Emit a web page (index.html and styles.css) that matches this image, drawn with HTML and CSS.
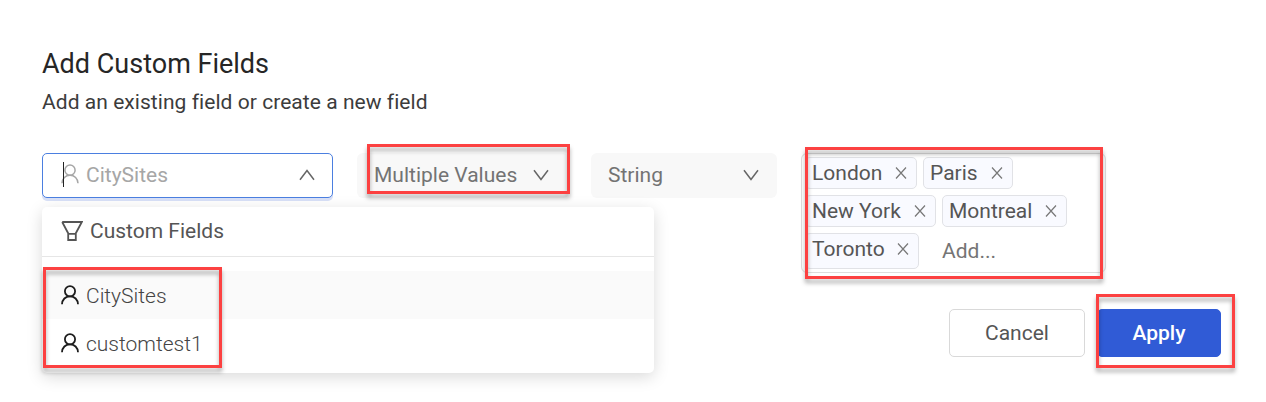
FILE: index.html
```
<!DOCTYPE html>
<html lang="en">
<head>
<meta charset="utf-8">
<title>Add Custom Fields</title>
<link rel="stylesheet" href="styles.css">
</head>
<body>
<svg class="defs" aria-hidden="true">
  <symbol id="user" viewBox="0 0 18 20"><circle cx="9" cy="6.2" r="5.1"/><path d="M1 19.3C1.2 14.5 4.5 11.3 9 11.3s7.800 3.200 8 8"/></symbol>
  <symbol id="down" viewBox="0 0 16 12"><path d="M1 1.200l7 9.300 7-9.300"/></symbol>
  <symbol id="up" viewBox="0 0 16 12"><path d="M1 10.800l7-9.300 7 9.300"/></symbol>
  <symbol id="close" viewBox="0 0 12 12"><path d="M1 .500l10 11M11 .500L1 11.500"/></symbol>
  <symbol id="filter" viewBox="0 0 22 20"><path d="M1.200 1h19.600L14.800 12.300v6.700h-7.600v-6.700L1.200 1M7.200 12.800h7.600"/></symbol>
</svg>
<main class="dialog">
  <h1 class="title">Add Custom Fields</h1>
  <p class="subtitle">Add an existing field or create a new field</p>
  <section class="fields">
    <div class="select select-name">
      <svg class="icon user"><use href="#user"/></svg>
      <span class="placeholder">CitySites</span>
      <svg class="icon chevron"><use href="#up"/></svg>
      <i class="caret"></i>
      <div class="dropdown">
        <div class="dropdown-head"><svg class="icon filter"><use href="#filter"/></svg><span>Custom Fields</span></div>
        <div class="options">
          <div class="option active"><svg class="icon user"><use href="#user"/></svg><span>CitySites</span></div>
          <div class="option"><svg class="icon user"><use href="#user"/></svg><span>customtest1</span></div>
        </div>
      </div>
    </div>
    <div class="select select-kind"><span>Multiple Values</span><svg class="icon chevron"><use href="#down"/></svg></div>
    <div class="select select-type"><span>String</span><svg class="icon chevron"><use href="#down"/></svg></div>
    <div class="tags">
      <div class="tag-row">
        <div class="tag london"><span>London</span><svg class="icon close"><use href="#close"/></svg></div>
        <div class="tag paris"><span>Paris</span><svg class="icon close"><use href="#close"/></svg></div>
      </div>
      <div class="tag-row">
        <div class="tag newyork"><span>New York</span><svg class="icon close"><use href="#close"/></svg></div>
        <div class="tag montreal"><span>Montreal</span><svg class="icon close"><use href="#close"/></svg></div>
      </div>
      <div class="tag-row">
        <div class="tag toronto"><span>Toronto</span><svg class="icon close"><use href="#close"/></svg></div>
        <span class="add">Add...</span>
      </div>
    </div>
  </section>
  <footer class="actions">
    <button class="button">Cancel</button>
    <button class="button primary">Apply</button>
  </footer>
  <div class="callout callout-kind"></div>
  <div class="callout callout-tags"></div>
  <div class="callout callout-options"></div>
  <div class="callout callout-apply"></div>
</main>
</body>
</html>
```
FILE: styles.css
```
* { box-sizing: border-box; }
body { margin: 0; background: #fff; color: #555; font: 21px/24px Roboto, "Liberation Sans", sans-serif; }
.defs { position: absolute; width: 0; height: 0; }
.dialog { position: relative; width: 1266px; height: 402px; padding: 47px 45px 0 42px; overflow: hidden; }
.title { margin: 0; font-size: 27px; font-weight: 400; line-height: 34px; color: #262626; }
.subtitle { margin: 9px 0 0; line-height: 24px; color: #3c3c3c; letter-spacing: .05px; }
.icon { flex: none; fill: none; stroke: currentColor; overflow: visible; }
.user { width: 18px; height: 20px; stroke-width: 1.7; }
.chevron { width: 16px; height: 12px; margin-left: auto; color: #666; stroke-width: 1.5; }
.filter { width: 22px; height: 20px; stroke-width: 1.8; }
.close { width: 12px; height: 12px; margin-left: auto; color: #777; stroke-width: 1.2; }

.fields { display: flex; align-items: flex-start; height: 120px; margin-top: 39px; }
.select { position: relative; display: flex; align-items: center; height: 45px; padding-bottom: 1px; border-radius: 6px; background: #f8f8f8; color: #737373; }
.select-name { width: 291px; margin-right: 24px; padding: 0 17px 1px 18px; border: 1px solid #4b7fe0; border-radius: 5px; background: #fff; box-shadow: 0 3px 0 #d8e0f7; color: #a6a6a6; }
.select-name > .user { margin: -3px 7px 0 0; stroke-width: 1.5; }
.caret { position: absolute; left: 20px; top: 8px; width: 1px; height: 25px; background: #222; }
.select-kind { width: 212px; margin-right: 22px; padding: 0 20px 1px 17px; }
.select-type { width: 186px; margin-right: 24px; padding: 0 18px 1px 17px; }

.dropdown { position: absolute; z-index: 1; left: -1px; top: 53px; width: 612px; height: 166px; border-radius: 5px; background: #fff; box-shadow: 0 4px 16px rgba(0,0,0,.15); color: #555; }
.dropdown-head { display: flex; align-items: center; gap: 7px; height: 50px; padding: 0 0 1px 19px; border-bottom: 1px solid #e6e6e6; }
.options { padding-top: 14px; font-weight: 300; }
.option { display: flex; align-items: center; gap: 7px; height: 48px; padding: 2px 0 0 19px; color: #444; }
.option .user { margin-top: -3px; color: #1d1d1d; stroke-width: 1.8; }
.active { background: #fafafa; }

.tags { display: flex; flex-direction: column; gap: 6px; width: 305px; height: 120px; padding: 3px; border: 1px solid #ddd; border-radius: 6px; }
.tag-row { display: flex; gap: 6px; }
.tag { display: flex; align-items: center; height: 32px; padding: 0 9px 1px 6px; border: 1px solid #e1e2e6; border-radius: 5px; background: #f9faff; }
.london { width: 112px; }
.paris { width: 90px; }
.newyork { width: 131px; }
.montreal { width: 125px; }
.toronto { width: 114px; height: 36px; padding-bottom: 4px; }
.add { margin: 6px 0 0 17px; color: #757575; }

.actions { display: flex; justify-content: flex-end; gap: 12px; margin-top: 36px; }
.button { width: 136px; height: 48px; padding: 0; border: 1px solid #d9d9d9; border-radius: 5px; background: #fff; color: #555; font: inherit; }
.primary { width: 124px; border-color: #305bd6; background: #305bd6; color: #fff; font-weight: 500; }

.callout { position: absolute; z-index: 2; border: 3px solid #fc4141; filter: drop-shadow(0 4px 2px rgba(0,0,0,.32)); }
.callout-kind { left: 367px; top: 144px; width: 203px; height: 50px; }
.callout-tags { left: 805px; top: 147px; width: 298px; height: 132px; }
.callout-options { left: 43px; top: 267px; width: 179px; height: 101px; }
.callout-apply { left: 1096px; top: 294px; width: 139px; height: 74px; }
```
